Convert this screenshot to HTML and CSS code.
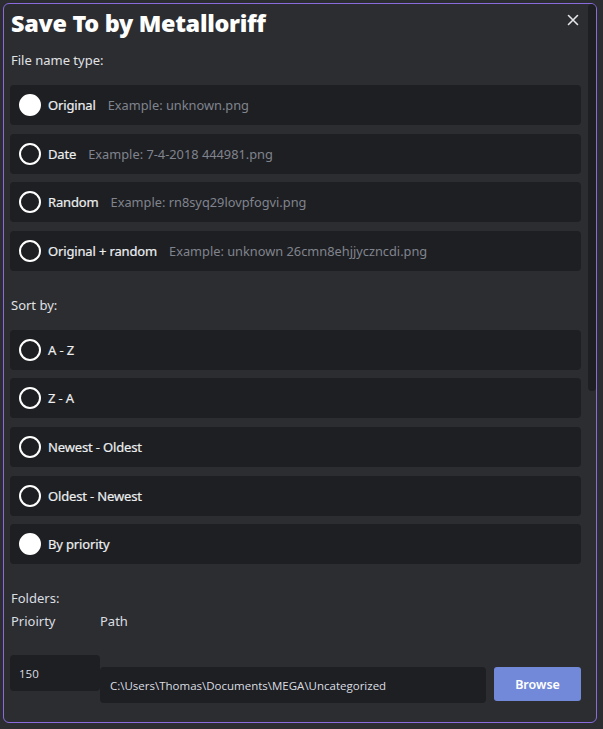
FILE: index.html
```html
<!DOCTYPE html>
<html>
<head>
<meta charset="utf-8">
<link rel="stylesheet" href="styles.css">
</head>
<body>
<div class="modal">
  <div class="content">
    <div class="header">
      <h1 class="title">Save To by Metalloriff</h1>
      <svg class="close" width="12" height="12" viewBox="0 0 12 12"><path d="M1.5 1.5 L10.5 10.5 M10.5 1.5 L1.5 10.5" stroke="#e3e5e8" stroke-width="1.6" stroke-linecap="round"/></svg>
    </div>

    <div class="section-label">File name type:</div>
    <div class="group">
      <div class="row"><span class="radio checked"></span><span class="label">Original</span><span class="example">Example: unknown.png</span></div>
      <div class="row"><span class="radio"></span><span class="label">Date</span><span class="example">Example: 7-4-2018 444981.png</span></div>
      <div class="row"><span class="radio"></span><span class="label">Random</span><span class="example">Example: rn8syq29lovpfogvi.png</span></div>
      <div class="row"><span class="radio"></span><span class="label">Original + random</span><span class="example">Example: unknown 26cmn8ehjjyczncdi.png</span></div>
    </div>

    <div class="section-label">Sort by:</div>
    <div class="group">
      <div class="row"><span class="radio"></span><span class="label">A - Z</span></div>
      <div class="row"><span class="radio"></span><span class="label">Z - A</span></div>
      <div class="row"><span class="radio"></span><span class="label">Newest - Oldest</span></div>
      <div class="row"><span class="radio"></span><span class="label">Oldest - Newest</span></div>
      <div class="row"><span class="radio checked"></span><span class="label">By priority</span></div>
    </div>

    <div class="folders-label">Folders:</div>
    <div class="cols">
      <span class="col-priority">Prioirty</span>
      <span class="col-path">Path</span>
    </div>
    <div class="folder-row">
      <div class="input priority">150</div>
      <div class="input path">C:\Users\Thomas\Documents\MEGA\Uncategorized</div>
      <button class="browse">Browse</button>
    </div>
  </div>
  <div class="scrollbar"></div>
</div>
</body>
</html>
```

FILE: styles.css
```css
* { box-sizing: border-box; }
html, body { margin: 0; padding: 0; }
body {
  background: #2b2d31;
  font-family: "Noto Sans", "Open Sans", sans-serif;
  color: #dbdee1;
  width: 603px;
  height: 729px;
  overflow: hidden;
}
.modal {
  margin: 3px 0 0 3px;
  width: 594px;
  height: 720px;
  border: 1px solid #8a6bdc;
  border-radius: 6px;
  background: #2b2d31;
  display: flex;
  overflow: hidden;
}
.content {
  flex: 1;
  padding: 0 0 0 6px;
  min-width: 0;
}
.header {
  display: flex;
  justify-content: space-between;
  align-items: flex-start;
  height: 46px;
}
.title {
  margin: 2px 0 0 1px;
  font-family: "Noto Sans", sans-serif;
  font-weight: 900;
  font-size: 23.4px;
  line-height: 34px;
  color: #ffffff;
  letter-spacing: -0.3px;
}
.close {
  margin: 10px 3px 0 0;
}
.section-label {
  font-size: 13px;
  line-height: 20px;
  margin: 0 0 15px 1px;
  color: #e0e2e5;
}
.group {
  display: flex;
  flex-direction: column;
  gap: 8.6px;
  margin-bottom: 24px;
}
.row {
  height: 40px;
  width: 571px;
  background: #1e1f22;
  border-radius: 4px;
  display: flex;
  align-items: center;
  padding-left: 9px;
}
.radio {
  width: 22px;
  height: 22px;
  border-radius: 50%;
  border: 2px solid #ffffff;
  flex: none;
}
.radio.checked {
  background: #ffffff;
}
.label {
  margin-left: 7px;
  font-size: 13px;
  font-weight: 400;
  letter-spacing: -0.15px;
  color: #eceef0;
  -webkit-text-stroke: 0.2px #eceef0;
}
.example {
  margin-left: 12px;
  font-size: 12.8px;
  color: #80848e;
}
.folders-label {
  font-size: 13px;
  line-height: 20px;
  margin-left: 1px;
  margin-top: 0;
}
.cols {
  display: flex;
  font-size: 13px;
  line-height: 20px;
  margin-top: 3px;
}
.col-priority { width: 90px; margin-left: 1px; }
.col-path { margin-left: -1px; }
.folder-row {
  display: flex;
  align-items: flex-start;
  margin-top: 24px;
}
.input {
  background: #1e1f22;
  border-radius: 4px;
  font-family: "Open Sans", "Noto Sans", sans-serif;
  font-size: 11.5px;
  color: #dbdee1;
  display: flex;
  align-items: center;
}
.priority {
  width: 90px;
  height: 36px;
  padding-left: 9px;
}
.path {
  margin-top: 12px;
  width: 386px;
  height: 36px;
  padding-left: 10px;
}
.browse {
  margin-top: 12px;
  margin-left: 8px;
  width: 87px;
  height: 34px;
  border: none;
  border-radius: 3px;
  background: #7289da;
  color: #ffffff;
  font-family: "Noto Sans", sans-serif;
  font-weight: 600;
  font-size: 12.5px;
}
.scrollbar {
  flex: none;
  width: 8px;
  height: 387px;
  margin: 0 0 0 6px;
  background: #1e1f22;
  border-radius: 4px;
}
```
